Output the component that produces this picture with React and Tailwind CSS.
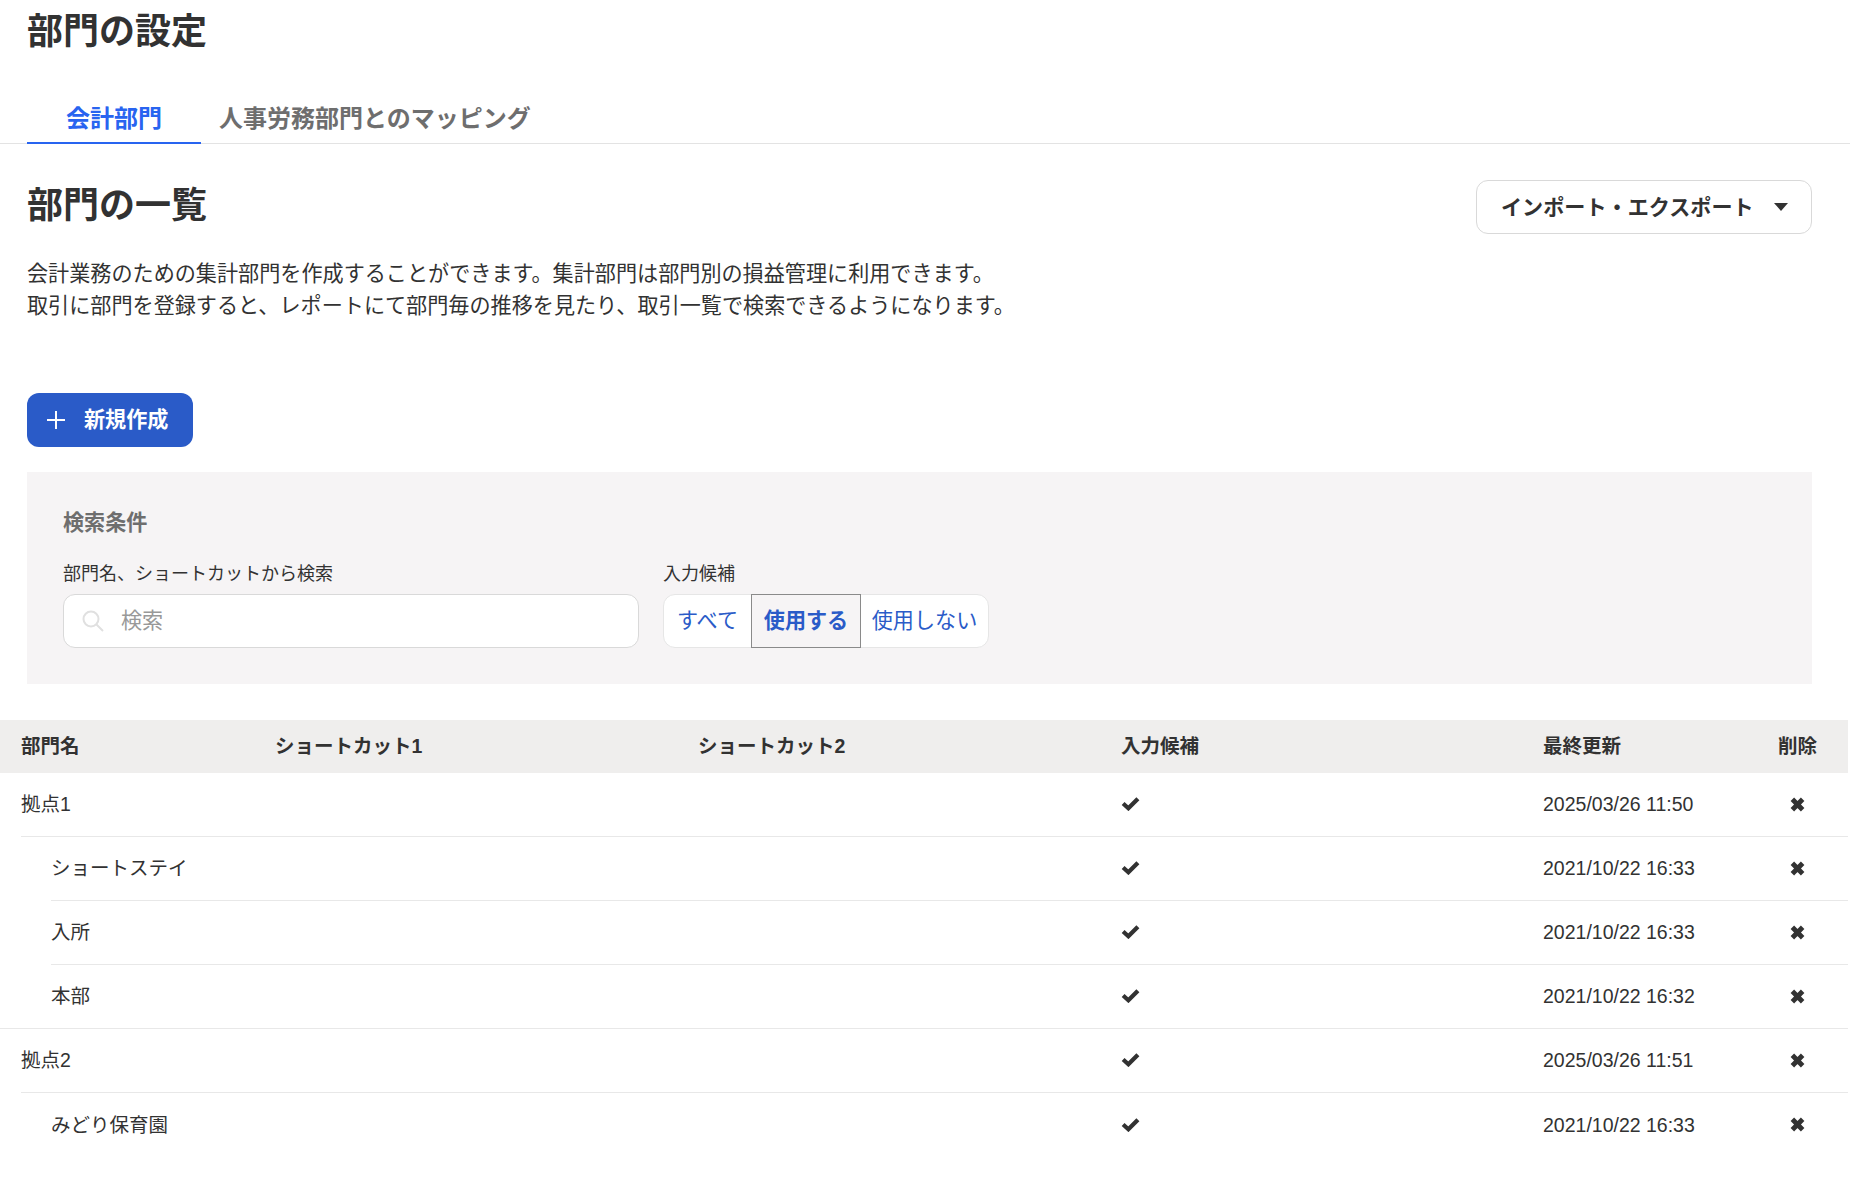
import React from "react";

const FONT = "font-['Liberation_Sans','Noto_Sans_CJK_JP',sans-serif]";

const rows = [
  { name: "拠点1", date: "2025/03/26 11:50", line: "ml-[21px] border-b", nameCls: "w-[233px]" },
  { name: "ショートステイ", date: "2021/10/22 16:33", line: "ml-[51px] border-b", nameCls: "w-[203px]" },
  { name: "入所", date: "2021/10/22 16:33", line: "ml-[51px] border-b", nameCls: "w-[203px]" },
  { name: "本部", date: "2021/10/22 16:32", line: "border-b", nameCls: "w-[254px] pl-[51px]" },
  { name: "拠点2", date: "2025/03/26 11:51", line: "ml-[21px] border-b", nameCls: "w-[233px]" },
  { name: "みどり保育園", date: "2021/10/22 16:33", line: "ml-[51px]", nameCls: "w-[203px]" },
];

function Check() {
  return (
    <svg viewBox="0 0 18 14" className="-mt-[3px] h-[15px] w-[19px] fill-none stroke-[#323232] stroke-[4]">
      <path d="M2 7l5 4.5L16 2.5" />
    </svg>
  );
}

function Cross() {
  return (
    <svg viewBox="0 0 14 14" className="-mt-[2px] h-[15px] w-[15px] fill-none stroke-[#323232] stroke-[4.6]">
      <path d="M2.2 2.2l9.6 9.6M11.8 2.2l-9.6 9.6" />
    </svg>
  );
}

function Row({ r }) {
  return (
    <div className={`flex h-16 items-center border-[#e8e8e8] pt-px ${r.line}`}>
      <div className={`${r.nameCls} shrink-0`}>{r.name}</div>
      <div className="w-[422px] shrink-0" />
      <div className="w-[424px] shrink-0" />
      <div className="w-[421px] shrink-0 pl-[21px]">
        <Check />
      </div>
      <div className="w-[236px] shrink-0 pl-[22px]">{r.date}</div>
      <div className="flex-1 pl-[33px]">
        <Cross />
      </div>
    </div>
  );
}

export default function App() {
  return (
    <div className={`${FONT} min-h-[1190px] bg-white text-[#323232]`}>
      <div className="px-[27px] pt-[11px]">
        <h1 className="text-[36px] leading-[42px] font-bold">部門の設定</h1>
      </div>

      <div className="mt-[43px] flex h-[48px] items-stretch border-b border-[#e3e3e3] pl-[27px]">
        <div className="-mb-px flex w-[174px] items-center justify-center border-b-2 border-[#2864f0] text-[24px] font-bold text-[#2864f0]">
          会計部門
        </div>
        <div className="flex items-center pb-[2px] pl-[18px] text-[24px] font-bold text-[#6e6e6e]">
          人事労務部門とのマッピング
        </div>
      </div>

      <div className="px-[27px] pt-[36px] pr-[38px]">
        <div className="flex items-start justify-between">
          <h2 className="mt-px text-[36px] leading-[50px] font-bold">部門の一覧</h2>
          <button className="flex h-[54px] w-[336px] items-center rounded-xl border border-[#d9d9d9] bg-white pl-[24px] text-[21.12px] font-bold">
            <span className="pt-px">インポート・エクスポート</span>
            <svg viewBox="0 0 14 8" className="ml-[20px] h-[8px] w-[14px] fill-[#323232]">
              <path d="M0 0h14L7 8z" />
            </svg>
          </button>
        </div>

        <p className="mt-[24px] text-[21.12px] leading-[32px]">
          会計業務のための集計部門を作成することができます。集計部門は部門別の損益管理に利用できます。
          <br />
          取引に部門を登録すると、レポートにて部門毎の推移を見たり、取引一覧で検索できるようになります。
        </p>

        <button className="mt-[71px] flex h-[54px] w-[166px] items-center rounded-xl bg-[#2a5bc8] pl-[19px] text-[21.12px] font-bold text-white">
          <svg viewBox="0 0 20 20" className="h-[20px] w-[20px] stroke-white stroke-2">
            <path d="M10 1v18M1 10h18" />
          </svg>
          <span className="ml-[18px]">新規作成</span>
        </button>

        <section className="mt-[25px] h-[212px] bg-[#f6f4f5] px-[36px] pt-[36px]">
          <h3 className="text-[21.12px] leading-[30px] font-bold text-[#6e6e6e]">検索条件</h3>
          <div className="mt-[24px] flex gap-[24px]">
            <div className="w-[576px]">
              <label className="block text-[18px] leading-[24px]">部門名、ショートカットから検索</label>
              <div className="mt-[8px] flex h-[54px] items-center rounded-xl border border-[#d9d9d9] bg-white pl-[17px]">
                <svg viewBox="0 0 24 24" className="h-[24px] w-[24px] fill-none stroke-[#e0e0e0] stroke-2">
                  <circle cx="10" cy="10" r="7.5" />
                  <path d="M15.5 15.5L22 22" />
                </svg>
                <span className="ml-[16px] text-[21.12px] text-[#999999]">検索</span>
              </div>
            </div>
            <div>
              <label className="block text-[18px] leading-[24px]">入力候補</label>
              <div className="mt-[8px] flex h-[54px] items-stretch rounded-xl border border-[#e6e6e6] bg-white text-[21.12px] text-[#2a5bc8]">
                <div className="flex w-[87px] items-center justify-center">すべて</div>
                <div className="-my-px flex w-[110px] items-center justify-center border border-[#8a8a8a] bg-[#f6f4f5] font-bold">
                  使用する
                </div>
                <div className="flex w-[127px] items-center justify-center">使用しない</div>
              </div>
            </div>
          </div>
        </section>
      </div>

      <div className="mt-[36px] mr-[2px] text-[19.5px]">
        <div className="flex h-[53px] items-center bg-[#efeeed] font-bold">
          <div className="w-[254px] shrink-0 pl-[21px]">部門名</div>
          <div className="w-[422px] shrink-0 pl-[21px]">ショートカット1</div>
          <div className="w-[424px] shrink-0 pl-[22px]">ショートカット2</div>
          <div className="w-[421px] shrink-0 pl-[21px]">入力候補</div>
          <div className="w-[236px] shrink-0 pl-[22px]">最終更新</div>
          <div className="flex-1 pl-[21px]">削除</div>
        </div>
        {rows.map((r) => (
          <Row key={r.name} r={r} />
        ))}
      </div>
    </div>
  );
}
